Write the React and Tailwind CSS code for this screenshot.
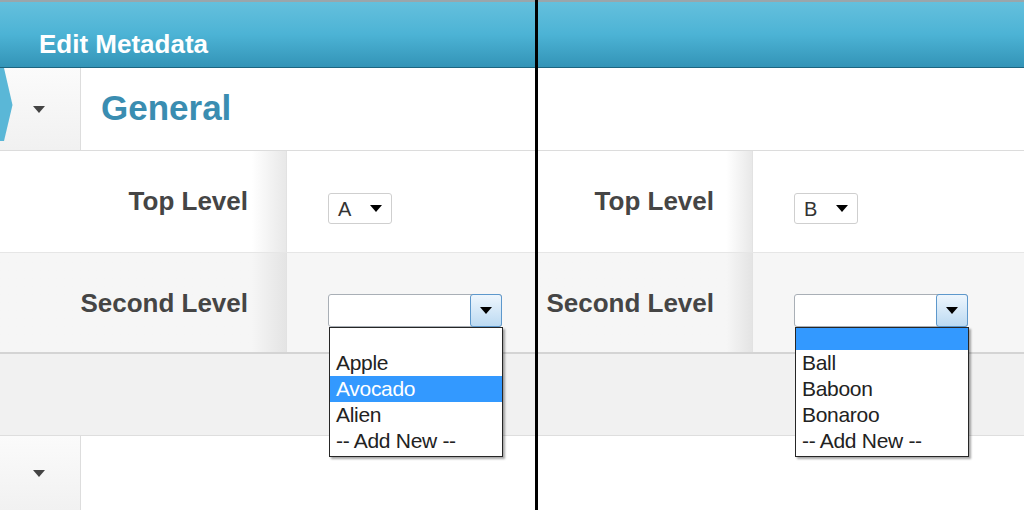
import React from "react";

function Caret({ className = "" }) {
  return (
    <svg width="12" height="7" viewBox="0 0 12 7" className={className}>
      <polygon points="0,0 12,0 6,7" fill="currentColor" />
    </svg>
  );
}

function SmallSelect({ value }) {
  return (
    <div className="flex h-[31px] w-[64px] items-center justify-between rounded-[3px] border border-[#cfcfcf] bg-white pl-[9px] pr-[9px] text-[20px] leading-none text-[#333]">
      <span>{value}</span>
      <Caret className="text-black" />
    </div>
  );
}

function ListSelect({ options, highlight }) {
  return (
    <div className="relative h-[33px] w-[174px]">
      <div className="flex h-full w-full rounded-[3px] border border-[#a9afb6] bg-white">
        <div className="flex-1" />
        <div className="-my-px -mr-px flex w-[32px] items-center justify-center rounded-[3px] border border-[#5d98cc] bg-linear-to-b from-[#eef6fd] to-[#bcdaf2]">
          <Caret className="text-black" />
        </div>
      </div>
      <div className="absolute left-px top-[33px] z-10 w-[174px] border border-[#262626] bg-white pb-[2px] shadow-[2px_2px_2px_rgba(0,0,0,0.35)]">
        {options.map((o, i) => (
          <div
            key={i}
            className={`${i === 0 ? "h-[22px]" : "h-[26px]"} pl-[6px] text-[21px] leading-[26px] tracking-[-0.3px] ${
              i === highlight ? "bg-[#3399ff] text-white" : "text-[#222]"
            }`}
          >
            {o}
          </div>
        ))}
      </div>
    </div>
  );
}

function LeftCell() {
  return (
    <div className="relative flex w-[81px] shrink-0 items-center justify-center border-r border-[#dddddd] bg-linear-to-b from-[#fbfbfb] to-[#f1f1f1] pr-[3px]">
      <Caret className="text-[#444]" />
    </div>
  );
}

function Panel({ left, labelWidth, sel1, options, highlight }) {
  return (
    <div className="flex h-full flex-col">
      {/* header */}
      <div className="h-[68px] shrink-0 border-t-2 border-b border-t-[#9aa6ab] border-b-[#1d6580] bg-linear-to-b from-[#64c0dd] via-[#4cb3d5] to-[#3394b7] pl-[39px] pt-[29px]">
        {left && (
          <div className="text-[26px] font-bold leading-none text-white">Edit Metadata</div>
        )}
      </div>

      {/* General row */}
      <div className="flex h-[83px] shrink-0 border-b border-[#dcdcdc] bg-white">
        {left && (
          <>
            <div className="relative flex w-[81px] shrink-0 items-center justify-center border-r border-[#dddddd] bg-linear-to-b from-[#fbfbfb] to-[#f1f1f1] pr-[3px]">
              <svg width="13" height="73" viewBox="0 0 13 73" className="absolute left-0 top-0">
                <polygon points="0,0 4,0 12.5,37 4,73 0,73" fill="#5ab7d7" />
              </svg>
              <Caret className="text-[#444]" />
            </div>
            <div className="pl-[20px] pt-[22px] text-[35px] font-bold leading-none text-[#3a8db1]">General</div>
          </>
        )}
      </div>

      {/* Top Level row */}
      <div className="flex h-[102px] shrink-0 border-b border-[#e6e6e6] bg-white">
        <div
          className={`${labelWidth} shrink-0 border-r border-[#e2e2e2] bg-linear-to-r from-white from-[88%] to-[#e8e8e8] pr-[38px] pt-[37px] text-right text-[26px] font-bold leading-none text-[#454545]`}
        >
          Top Level
        </div>
        <div className="flex-1 pl-[41px] pt-[42px]">
          <SmallSelect value={sel1} />
        </div>
      </div>

      {/* Second Level row */}
      <div className="flex h-[101px] shrink-0 border-b-2 border-[#d4d4d4] bg-[#f6f6f6]">
        <div
          className={`${labelWidth} shrink-0 border-r border-[#e2e2e2] bg-linear-to-r from-[#f6f6f6] from-[88%] to-[#e4e4e4] pr-[38px] pt-[37px] text-right text-[26px] font-bold leading-none text-[#454545]`}
        >
          Second Level
        </div>
        <div className="flex-1 pl-[41px] pt-[41px]">
          <ListSelect options={options} highlight={highlight} />
        </div>
      </div>

      {/* gray band */}
      <div className="h-[82px] shrink-0 border-b border-[#dedede] bg-[#f1f1f1]" />

      {/* bottom row */}
      <div className="flex flex-1 bg-white">{left && <LeftCell />}</div>
    </div>
  );
}

export default function App() {
  return (
    <div className="flex h-[510px] w-[1024px] overflow-hidden bg-white font-['Liberation_Sans',Arial,sans-serif]">
      <div className="w-[535px] shrink-0 overflow-hidden">
        <Panel
          left
          labelWidth="w-[287px]"
          sel1="A"
          options={["", "Apple", "Avocado", "Alien", "-- Add New --"]}
          highlight={2}
        />
      </div>
      <div className="w-[3px] shrink-0 bg-black" />
      <div className="flex-1 overflow-hidden">
        <Panel
          left={false}
          labelWidth="w-[215px]"
          sel1="B"
          options={["", "Ball", "Baboon", "Bonaroo", "-- Add New --"]}
          highlight={0}
        />
      </div>
    </div>
  );
}
